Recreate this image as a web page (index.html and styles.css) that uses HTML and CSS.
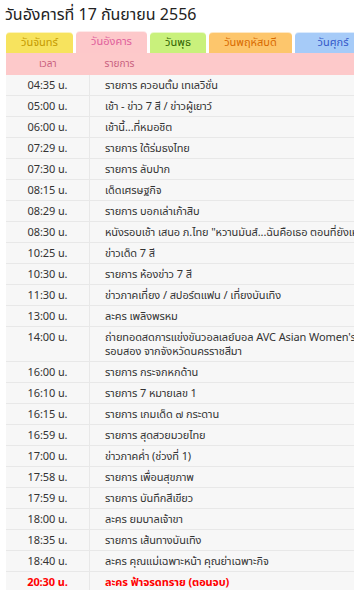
FILE: index.html
```html
<!DOCTYPE html>
<html lang="th">
<head>
<meta charset="utf-8">
<title>ผังรายการ</title>
<link rel="stylesheet" href="styles.css">
</head>
<body>
<div class="page">
  <h1 class="title">วันอังคารที่ 17 กันยายน 2556</h1>
  <div class="tabs">
    <div class="tab tab-mon">วันจันทร์</div>
    <div class="tab tab-tue active">วันอังคาร</div>
    <div class="tab tab-wed">วันพุธ</div>
    <div class="tab tab-thu">วันพฤหัสบดี</div>
    <div class="tab tab-fri">วันศุกร์</div>
  </div>
  <table class="sched">
    <thead>
      <tr><th class="c-time">เวลา</th><th class="c-prog">รายการ</th></tr>
    </thead>
    <tbody>
      <tr><td class="c-time">04:35 น.</td><td class="c-prog">รายการ ควอนตั้ม เทเลวิชั่น</td></tr>
      <tr><td class="c-time">05:00 น.</td><td class="c-prog">เช้า - ข่าว 7 สี / ข่าวผู้เยาว์</td></tr>
      <tr><td class="c-time">06:00 น.</td><td class="c-prog">เช้านี้...ที่หมอชิต</td></tr>
      <tr><td class="c-time">07:29 น.</td><td class="c-prog">รายการ ใต้ร่มธงไทย</td></tr>
      <tr><td class="c-time">07:30 น.</td><td class="c-prog">รายการ ลับปาก</td></tr>
      <tr><td class="c-time">08:15 น.</td><td class="c-prog">เด็ดเศรษฐกิจ</td></tr>
      <tr><td class="c-time">08:29 น.</td><td class="c-prog">รายการ บอกเล่าเก้าสิบ</td></tr>
      <tr><td class="c-time">08:30 น.</td><td class="c-prog">หนังรอบเช้า เสนอ ภ.ไทย "หวานมันส์...ฉันคือเธอ ตอนที่ยังเหลือเชื่อ"</td></tr>
      <tr><td class="c-time">10:25 น.</td><td class="c-prog">ข่าวเด็ด 7 สี</td></tr>
      <tr><td class="c-time">10:30 น.</td><td class="c-prog">รายการ ห้องข่าว 7 สี</td></tr>
      <tr><td class="c-time">11:30 น.</td><td class="c-prog">ข่าวภาคเที่ยง / สปอร์ตแฟน / เที่ยงบันเทิง</td></tr>
      <tr><td class="c-time">13:00 น.</td><td class="c-prog">ละคร เพลิงพรหม</td></tr>
      <tr><td class="c-time">14:00 น.</td><td class="c-prog">ถ่ายทอดสดการแข่งขันวอลเลย์บอล AVC Asian Women's Volleyball Championship 2013<br>รอบสอง จากจังหวัดนครราชสีมา</td></tr>
      <tr><td class="c-time">16:00 น.</td><td class="c-prog">รายการ กระจกหกด้าน</td></tr>
      <tr><td class="c-time">16:10 น.</td><td class="c-prog">รายการ 7 หมายเลข 1</td></tr>
      <tr><td class="c-time">16:15 น.</td><td class="c-prog">รายการ เกมเด็ด ๗ กระดาน</td></tr>
      <tr><td class="c-time">16:59 น.</td><td class="c-prog">รายการ สุดสวยมวยไทย</td></tr>
      <tr><td class="c-time">17:00 น.</td><td class="c-prog">ข่าวภาคค่ำ (ช่วงที่ 1)</td></tr>
      <tr><td class="c-time">17:58 น.</td><td class="c-prog">รายการ เพื่อนสุขภาพ</td></tr>
      <tr><td class="c-time">17:59 น.</td><td class="c-prog">รายการ บันทึกสีเขียว</td></tr>
      <tr><td class="c-time">18:00 น.</td><td class="c-prog">ละคร ยมบาลเจ้าขา</td></tr>
      <tr><td class="c-time">18:35 น.</td><td class="c-prog">รายการ เส้นทางบันเทิง</td></tr>
      <tr><td class="c-time">18:40 น.</td><td class="c-prog">ละคร คุณแม่เฉพาะหน้า คุณย่าเฉพาะกิจ</td></tr>
      <tr class="now"><td class="c-time">20:30 น.</td><td class="c-prog">ละคร ฟ้าจรดทราย (ตอนจบ)</td></tr>
    </tbody>
  </table>
</div>
</body>
</html>
```

FILE: styles.css
```css
html, body {
  margin: 0;
  padding: 0;
  background: #ffffff;
  overflow: hidden;
}

.page {
  width: 354px;
  overflow: hidden;
  font-family: Tahoma, "Noto Sans Thai", "Noto Sans", "DejaVu Sans", sans-serif;
  color: #333333;
}

.title {
  margin: 0;
  padding: 4px 0 0 5px;
  height: 27px;
  box-sizing: border-box;
  font-size: 16px;
  font-weight: normal;
  line-height: 22px;
  color: #222222;
  white-space: nowrap;
}

.tabs {
  display: flex;
  align-items: flex-end;
  gap: 3px;
  margin: 4px 0 0 6px;
  width: 600px;
  height: 22px;
}

.tab {
  height: 21px;
  box-sizing: border-box;
  border-radius: 4px 4px 0 0;
  border-top: 1px solid rgba(255, 255, 255, 0.6);
  font-size: 11px;
  line-height: 19px;
  text-align: center;
  white-space: nowrap;
}

.tab.active {
  height: 22px;
  line-height: 20px;
}

.tab-mon { width: 67px; background: #f7e35e; color: #c49a00; }
.tab-tue { width: 71px; background: #fdc8ca; color: #e0609c; }
.tab-wed { width: 56px; background: #c9f17c; color: #2f6200; }
.tab-thu { width: 83px; background: #fdc66c; color: #d86a00; }
.tab-fri { width: 76px; background: #a6cbf8; color: #3458c8; }

.sched {
  margin-left: 6px;
  width: 600px;
  border-collapse: collapse;
  font-size: 11px;
  letter-spacing: -0.1px;
}

.sched th {
  background: #fdc9ca;
  color: #c8607e;
  font-weight: normal;
  font-size: 10px;
  height: 22px;
  padding: 0;
  line-height: 14px;
  letter-spacing: 0;
}

.sched th.c-time { text-align: center; }
.sched th.c-prog { text-align: left; padding-left: 15px; }

.sched td {
  background: #f7f7f7;
  border-bottom: 1px solid #e8e8e8;
  padding: 4px 0 2px 0;
  line-height: 14px;
  vertical-align: top;
  white-space: nowrap;
  color: #333333;
}

.sched .c-time {
  width: 83px;
  text-align: center;
}

.sched td.c-time {
  border-right: 1px solid #e8e8e8;
}

.sched td.c-prog {
  padding-left: 15px;
}

.sched tr.now td {
  color: #ff0000;
  font-weight: bold;
}
```
